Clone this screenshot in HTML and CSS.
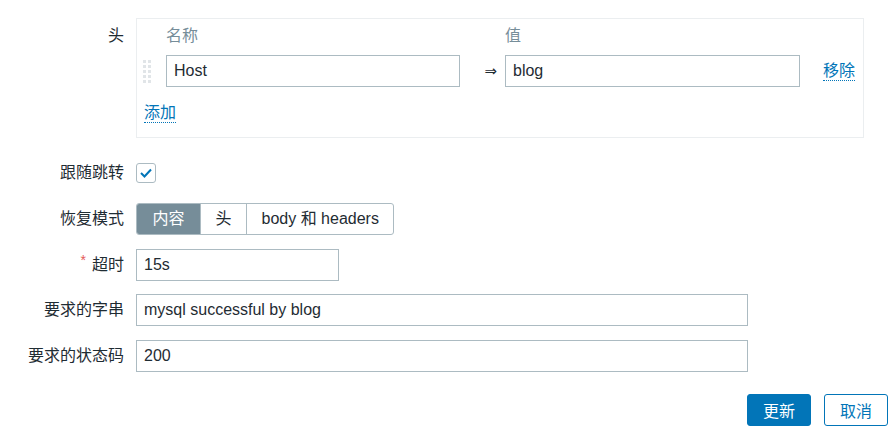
FILE: index.html
```html
<!DOCTYPE html>
<html lang="zh">
<head>
<meta charset="utf-8">
<title>HTTP 监控</title>
<link rel="stylesheet" href="styles.css">
</head>
<body>
<div class="page">
  <div class="form">
    <div class="label label-top">头</div>
    <div class="field">
      <div class="hbox">
        <div class="hgrid">
          <span></span>
          <span class="th">名称</span>
          <span></span>
          <span class="th">值</span>
          <span></span>
          <span class="drag">
            <svg width="8" height="23" viewBox="0 0 8 23"><g fill="#e1e5e8"><rect x="0" y="0" width="3" height="3"/><rect x="5" y="0" width="3" height="3"/><rect x="0" y="5" width="3" height="3"/><rect x="5" y="5" width="3" height="3"/><rect x="0" y="10" width="3" height="3"/><rect x="5" y="10" width="3" height="3"/><rect x="0" y="15" width="3" height="3"/><rect x="5" y="15" width="3" height="3"/><rect x="0" y="20" width="3" height="3"/><rect x="5" y="20" width="3" height="3"/></g></svg>
          </span>
          <input class="input" type="text" value="Host">
          <span class="arrow">⇒</span>
          <input class="input" type="text" value="blog">
          <span class="act"><a class="link">移除</a></span>
        </div>
        <div class="add"><a class="link">添加</a></div>
      </div>
    </div>

    <div class="label">跟随跳转</div>
    <div class="field field-mid">
      <span class="checkbox"><svg width="12" height="10" viewBox="0 0 12 10"><path d="M1 5 L4.5 8.5 L11 1.5" fill="none" stroke="#0275b8" stroke-width="2"/></svg></span>
    </div>

    <div class="label">恢复模式</div>
    <div class="field">
      <div class="radio">
        <span class="seg seg-on">内容</span>
        <span class="seg">头</span>
        <span class="seg">body 和 headers</span>
      </div>
    </div>

    <div class="label"><span class="req">*</span>超时</div>
    <div class="field"><input class="input w-short" type="text" value="15s"></div>

    <div class="label">要求的字串</div>
    <div class="field"><input class="input w-long" type="text" value="mysql successful by blog"></div>

    <div class="label">要求的状态码</div>
    <div class="field"><input class="input w-long" type="text" value="200"></div>
  </div>

  <div class="buttons">
    <button class="btn btn-main">更新</button>
    <button class="btn btn-alt">取消</button>
  </div>
</div>
</body>
</html>
```

FILE: styles.css
```css
html, body {
  margin: 0;
  padding: 0;
  background: #ffffff;
}

body {
  font-family: "Liberation Sans", Arial, "Noto Sans CJK SC", sans-serif;
  font-size: 16px;
  color: #1f2c33;
}

.page {
  padding-top: 18px;
  padding-right: 1px;
}

.form {
  display: grid;
  grid-template-columns: 124px 1fr;
  column-gap: 12px;
  row-gap: 13.67px;
}

.label {
  text-align: right;
  height: 32px;
  line-height: 32px;
  white-space: nowrap;
  overflow: visible;
}

.label-top {
  height: 20px;
  line-height: 20px;
  padding-top: 8px;
}

.req {
  color: #e45959;
  font-size: 14px;
  line-height: 0;
  vertical-align: 5px;
  margin-right: 6px;
}

.field {
  display: flex;
  align-items: center;
  min-height: 32px;
}

.hbox {
  width: 728px;
  box-sizing: border-box;
  border: 1px solid #ebeef0;
  padding: 7px 7px 14px 6px;
  margin-bottom: 5.67px;
}

.hgrid {
  display: grid;
  grid-template-columns: 23px 294px 45px 295px 1fr;
  grid-template-rows: 20px 32px;
  row-gap: 9px;
  align-items: center;
}

.th {
  color: #768d99;
  height: 20px;
  line-height: 20px;
}

.drag {
  display: flex;
  align-items: center;
  height: 32px;
}

.drag svg {
  display: block;
}

.arrow {
  text-align: right;
  padding-right: 8px;
  font-family: "DejaVu Sans", sans-serif;
  font-size: 15px;
  line-height: 20px;
  color: #1f2c33;
}

.act {
  padding-left: 23px;
}

.link {
  display: inline-block;
  color: #0275b8;
  height: 18px;
  line-height: 18px;
  border-bottom: 1px dotted #0275b8;
  cursor: pointer;
}

.add {
  margin-top: 17px;
  padding-left: 1px;
  height: 19px;
}

.input {
  box-sizing: border-box;
  height: 32px;
  border: 1px solid #acbbc2;
  border-radius: 0;
  padding: 0 7px;
  font-family: "Liberation Sans", Arial, "Noto Sans CJK SC", sans-serif;
  font-size: 16px;
  color: #1f2c33;
  background: #ffffff;
  outline: none;
  margin: 0;
}

.hgrid .input {
  width: 100%;
}

.w-short {
  width: 203px;
}

.w-long {
  width: 612px;
}

.checkbox {
  box-sizing: border-box;
  width: 20px;
  height: 20px;
  border: 1px solid #acbbc2;
  border-radius: 3px;
  display: flex;
  align-items: center;
  justify-content: center;
  background: #ffffff;
}

.radio {
  display: flex;
  height: 32px;
  border: 1px solid #acbbc2;
  border-radius: 3px;
  box-sizing: border-box;
  overflow: hidden;
}

.seg {
  padding: 0 14.5px;
  height: 30px;
  line-height: 30px;
  border-left: 1px solid #acbbc2;
  color: #1f2c33;
  white-space: nowrap;
}

.seg:first-child {
  border-left: none;
}

.seg-on {
  background: #768d99;
  color: #ffffff;
  padding: 0 15.5px;
}

.buttons {
  display: flex;
  justify-content: flex-end;
  gap: 13px;
  margin-top: 22px;
}

.btn {
  box-sizing: border-box;
  height: 32px;
  width: 64px;
  border-radius: 3px;
  font-family: "Liberation Sans", Arial, "Noto Sans CJK SC", sans-serif;
  font-size: 16px;
  padding: 0;
  cursor: pointer;
}

.btn-main {
  background: #0275b8;
  border: 1px solid #0275b8;
  color: #ffffff;
}

.btn-alt {
  background: #ffffff;
  border: 1px solid #0275b8;
  color: #0275b8;
}
```
